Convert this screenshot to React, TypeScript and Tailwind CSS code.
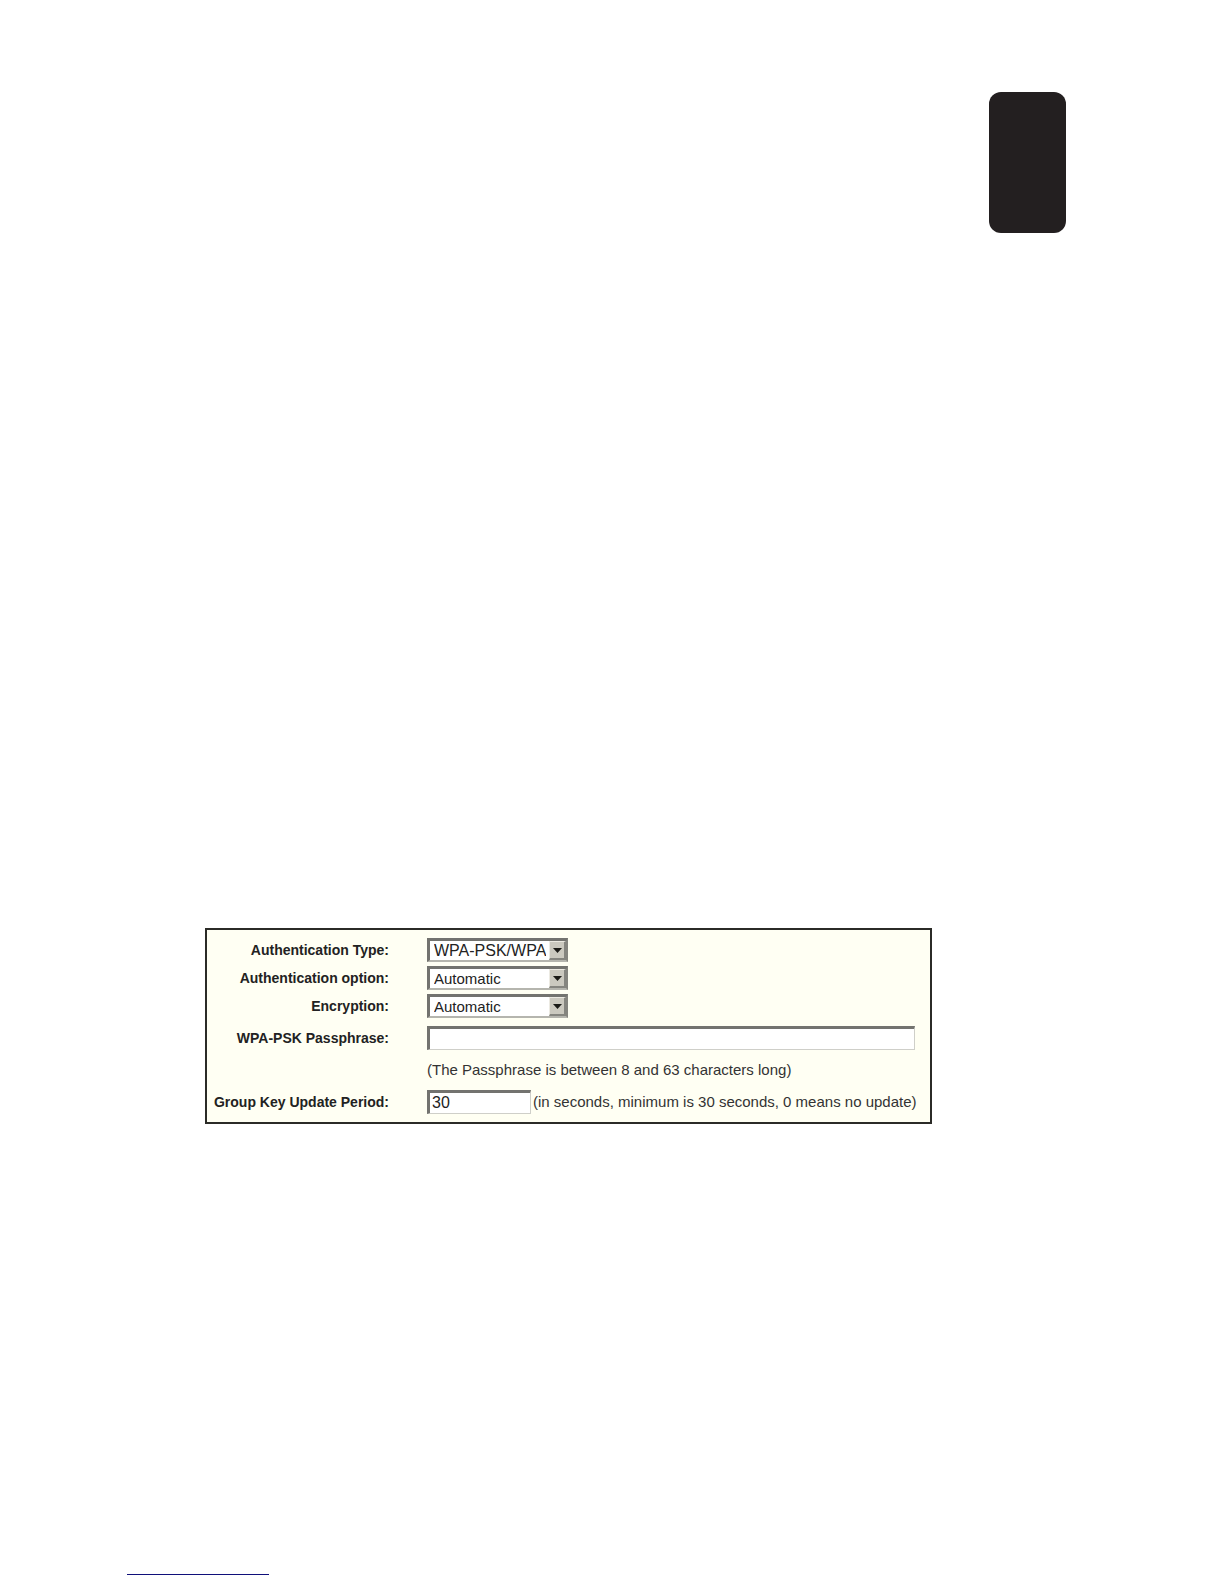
import { useState } from "react";

const FIELD =
  "h-6 rounded-none border-t-[3px] border-l-[3px] border-r border-b border-t-[#73736f] border-l-[#73736f] border-r-[#cfcfc9] border-b-[#cfcfc9] bg-white text-[#222] outline-none";

type RowProps = {
  label?: string;
  htmlFor?: string;
  children: React.ReactNode;
};

const Row = ({ label, htmlFor, children }: RowProps) => {
  return (
    <div className="flex h-6 items-center">
      <div className="w-[182px] shrink-0 text-right">
        {label && (
          <label htmlFor={htmlFor} className="block text-[14px] leading-5 font-bold whitespace-nowrap text-[#222]">
            {label}
          </label>
        )}
      </div>
      <div className="ml-[38px] flex min-w-0 flex-1 items-center">{children}</div>
    </div>
  );
};

type SelectBoxProps = {
  id: string;
  options: string[];
  large?: boolean;
};

const SelectBox = ({ id, options, large }: SelectBoxProps) => {
  const [value, setValue] = useState(options[0]);
  return (
    <div className="relative h-6 w-[141px]">
      <select
        id={id}
        value={value}
        onChange={(e) => setValue(e.target.value)}
        className={`h-6 w-full appearance-none overflow-hidden rounded-none border-t-[3px] border-l-[3px] border-r-2 border-b-2 border-t-[#73736f] border-l-[#73736f] border-r-[#85857f] border-b-[#b5b5ae] bg-white pr-5 pl-1 leading-5 whitespace-nowrap text-[#222] outline-none ${
          large ? "text-[16px]" : "text-[15px]"
        }`}
      >
        {options.map((option) => (
          <option key={option} value={option}>
            {option}
          </option>
        ))}
      </select>
      <span className="pointer-events-none absolute top-[3px] right-[2px] flex h-[19px] w-[17px] items-center justify-center border-t border-l border-r-2 border-b-2 border-t-[#eceae2] border-l-[#eceae2] border-r-[#85857f] border-b-[#85857f] bg-[#cbc9bf]">
        <svg width="9" height="5" viewBox="0 0 9 5" aria-hidden="true">
          <path d="M0 0h9L4.5 5z" fill="#1a1a16" />
        </svg>
      </span>
    </div>
  );
};

const App = () => {
  const [passphrase, setPassphrase] = useState("");
  const [period, setPeriod] = useState("30");

  return (
    <div className="min-h-screen bg-white font-['Liberation_Sans',Arial,sans-serif]">
      <div className="flex justify-end pt-[92px] pr-[158px]">
        <div className="h-[141px] w-[77px] rounded-xl bg-[#231f20]" />
      </div>

      <div className="mt-[695px] pr-[292px] pl-[205px]">
        <form className="flex flex-col gap-2 border-2 border-[#2b2b27] bg-[#fffff3] pt-2 pr-[15px] pb-2">
          <div className="flex flex-col gap-1">
            <Row label="Authentication Type:" htmlFor="auth-type">
              <SelectBox id="auth-type" options={["WPA-PSK/WPA2-PSK", "WPA/WPA2"]} large />
            </Row>
            <Row label="Authentication option:" htmlFor="auth-option">
              <SelectBox id="auth-option" options={["Automatic", "WPA-PSK", "WPA2-PSK"]} />
            </Row>
            <Row label="Encryption:" htmlFor="encryption">
              <SelectBox id="encryption" options={["Automatic", "TKIP", "AES"]} />
            </Row>
          </div>
          <Row label="WPA-PSK Passphrase:" htmlFor="passphrase">
            <input
              id="passphrase"
              type="text"
              value={passphrase}
              onChange={(e) => setPassphrase(e.target.value)}
              className={`${FIELD} w-full px-1 text-[16px]`}
            />
          </Row>
          <Row>
            <p className="text-[15px] leading-5 whitespace-nowrap text-[#333]">
              (The Passphrase is between 8 and 63 characters long)
            </p>
          </Row>
          <Row label="Group Key Update Period:" htmlFor="period">
            <input
              id="period"
              type="text"
              value={period}
              onChange={(e) => setPeriod(e.target.value)}
              className={`${FIELD} w-[104px] shrink-0 px-0.5 text-[16px]`}
            />
            <span className="ml-0.5 text-[15px] leading-5 whitespace-nowrap text-[#333]">
              (in seconds, minimum is 30 seconds, 0 means no update)
            </span>
          </Row>
        </form>
      </div>

      <hr className="mt-[450px] ml-[127px] w-[142px] border-t border-[#10107a]" />
    </div>
  );
};

export default App;
